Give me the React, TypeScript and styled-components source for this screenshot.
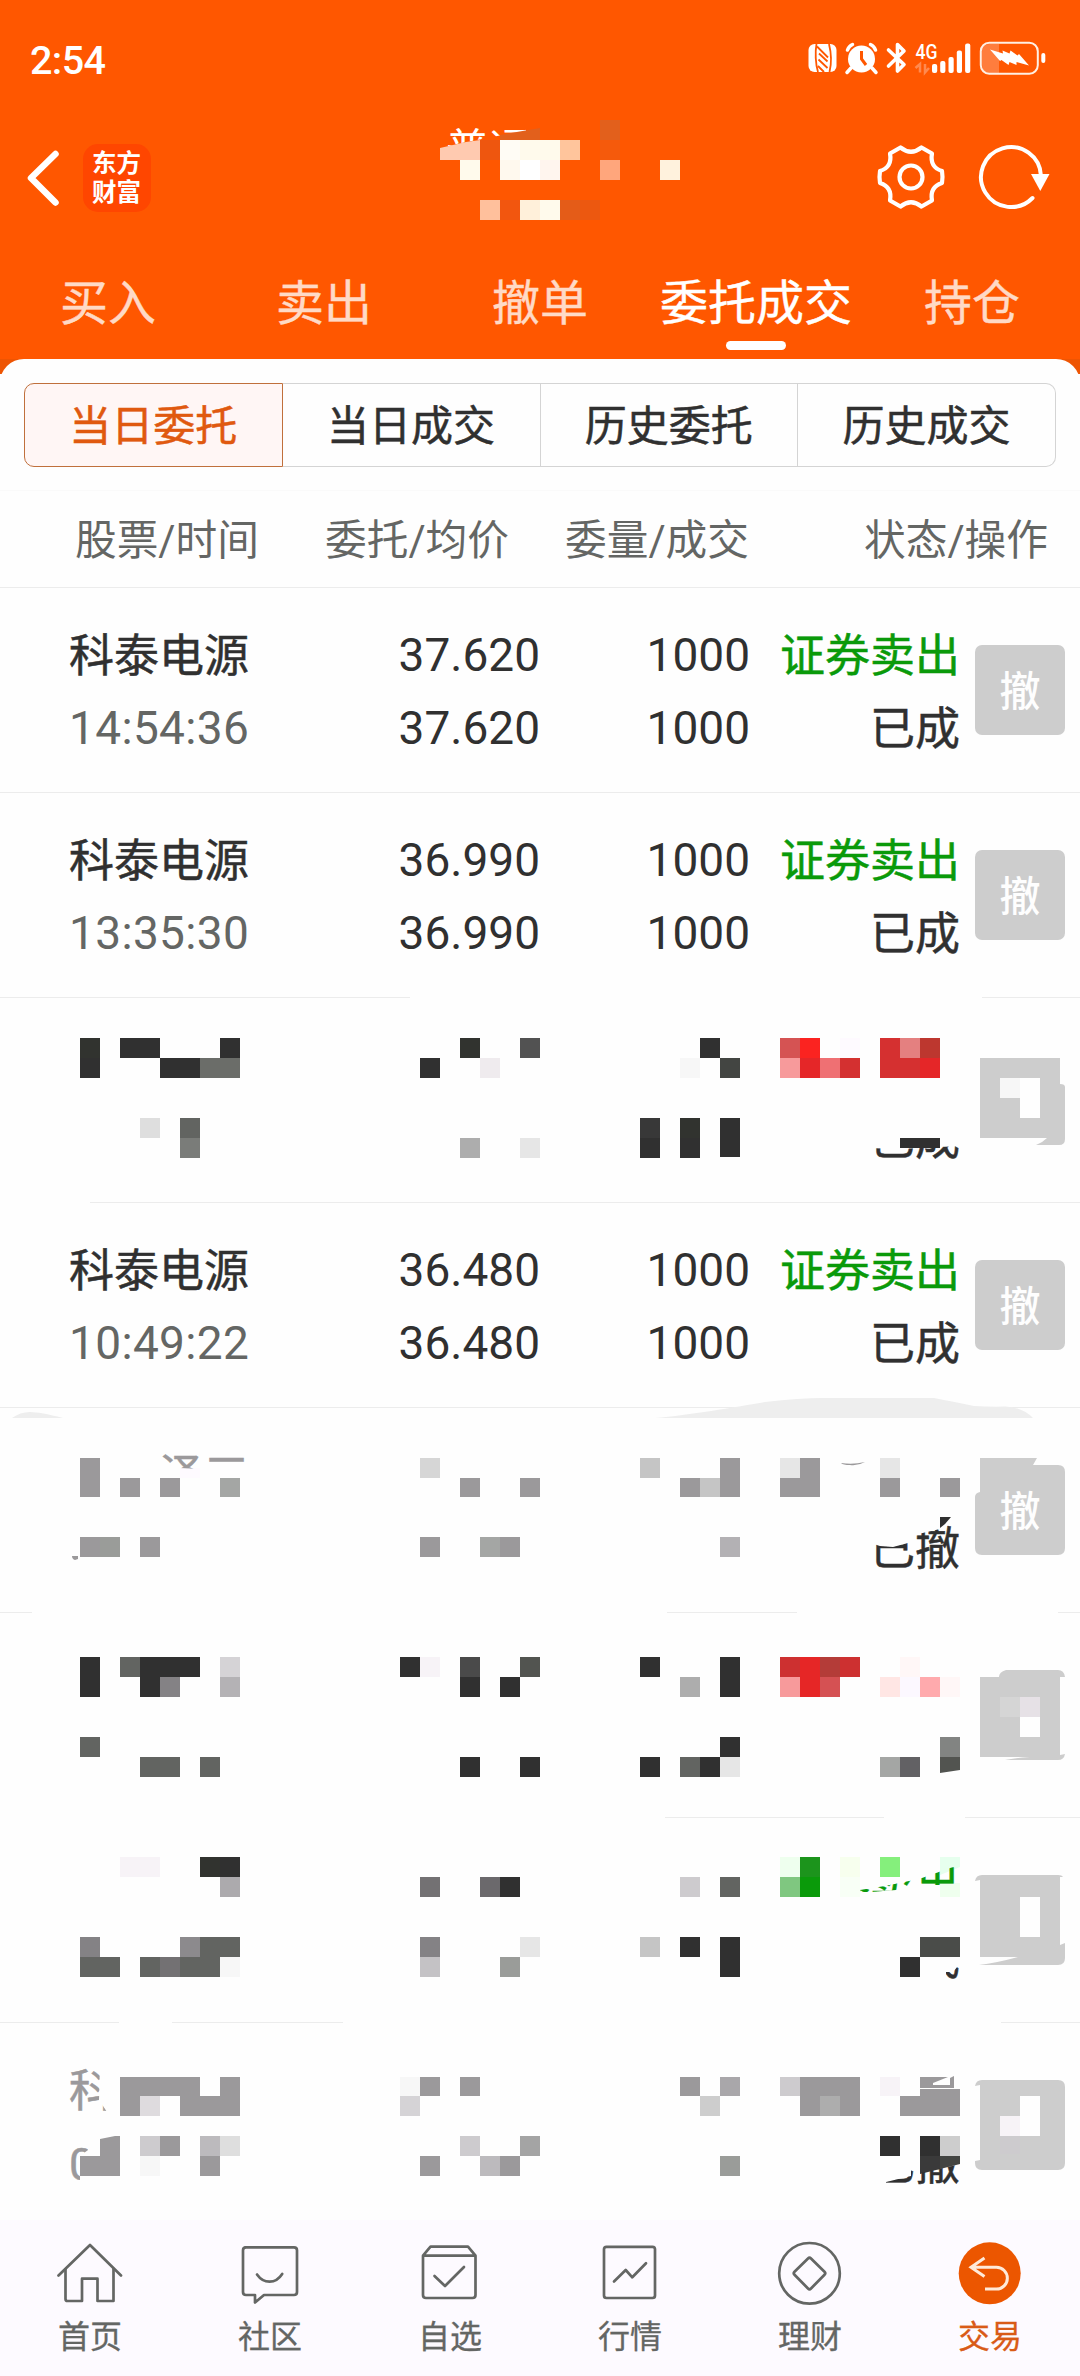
import React from "react";
import styled, { createGlobalStyle } from "styled-components";

type Point = [number, number];
/* column, top, fill, columns spanned, height */
type Block = [number, number, string, number?, number?];
interface Fragment { text: string; clip: Point[] }
interface Order {
  name?: string;
  time?: string;
  price?: string;
  filled?: string;
  qty?: string;
  side?: string;
  state?: string;
  cover?: Cover;
}
interface Cover {
  name?: Fragment;
  time?: Fragment;
  side?: Fragment;
  state?: Fragment;
  button: string;
  buttonLabel?: boolean;
  blocks: Block[];
  shapes?: [string, string][];
  rule: [number, number][];
}

const GlobalStyle = createGlobalStyle`
  * { box-sizing: border-box; }
  body {
    margin: 0;
    background: #fefefe;
    font-family: Roboto, "Noto Sans CJK SC", sans-serif;
  }
`;

const Page = styled.div`
  width: 1080px;
  height: 2376px;
  display: flex;
  flex-direction: column;
  overflow: hidden;
  background: #fefefe;
`;

const Header = styled.header`
  flex: none;
  height: 359px;
  background: #ff5700;
  color: #fff;
`;

const StatusBar = styled.div`
  height: 118px;
  padding: 0 33px 0 30px;
  display: flex;
  align-items: center;
  justify-content: space-between;
`;

const Clock = styled.span`
  font-size: 39.5px;
  font-weight: 500;
  line-height: 48px;
  letter-spacing: -0.6px;
  padding-top: 3px;
`;

const TitleBar = styled.div`
  height: 120px;
  display: grid;
  grid-template-columns: 1fr 300px 1fr;
  align-items: center;
`;

const TitleLeft = styled.div`
  display: flex;
  align-items: center;
  gap: 23px;
  padding-left: 24px;
`;

const TitleRight = styled.div`
  display: flex;
  align-items: center;
  justify-content: flex-end;
  gap: 32px;
  padding: 0 28px 2px 0;
`;

const Logo = styled.div`
  width: 68px;
  height: 68px;
  border-radius: 15px;
  background: #ff4600;
  padding: 3px 9px 0 9px;
  font-family: "Noto Sans CJK SC", sans-serif;
  font-size: 24.5px;
  font-weight: 700;
  line-height: 29px;
  word-break: break-all;
`;

const TitleBox = styled.div`
  position: relative;
  width: 300px;
  height: 120px;
`;

const TitleText = styled.div`
  padding-left: 56px;
  font-size: 43px;
  line-height: 64px;
  clip-path: polygon(50px 0, 136px 0, 136px 14px, 112px 17px, 98px 20px, 76px 24px, 50px 30px);
`;

const Overlay = styled.svg`
  position: absolute;
  inset: 0;
  width: 100%;
  height: 100%;
`;

const Tabs = styled.nav`
  display: flex;
  height: 121px;
`;

const Tab = styled.div<{ $active?: boolean }>`
  flex: 1;
  display: flex;
  flex-direction: column;
  align-items: center;
  padding-top: 34px;
  font-size: 48px;
  line-height: 64px;
  white-space: nowrap;
  -webkit-text-stroke: 0.4px currentColor;
  color: ${(p) => (p.$active ? "#fff" : "#ffdac6")};
  &::after {
    content: "";
    width: 60px;
    height: 9px;
    margin-top: 5px;
    border-radius: 5px;
    background: ${(p) => (p.$active ? "#fff" : "transparent")};
  }
`;

const Body = styled.main`
  flex: 1;
  min-height: 0;
  overflow: hidden;
  background: linear-gradient(#ee5503 0 15px, #fefefe 15px);
`;

const Card = styled.section`
  background: #fefefe;
  border-radius: 24px 24px 0 0;
  padding-top: 24px;
`;

const Segments = styled.div`
  display: flex;
  height: 84px;
  margin: 0 24px 23px;
`;

const Segment = styled.div<{ $active?: boolean }>`
  flex: 1;
  display: flex;
  align-items: center;
  justify-content: center;
  font-size: 42px;
  line-height: 60px;
  padding-top: 4px;
  -webkit-text-stroke: 0.5px currentColor;
  color: ${(p) => (p.$active ? "#e0590f" : "#303030")};
  background: ${(p) => (p.$active ? "#fff6f5" : "transparent")};
  border: 1px solid ${(p) => (p.$active ? "#c0703c" : "#d4d4d4")};
  border-left-width: ${(p) => (p.$active ? "1px" : "0")};
  &:first-child { border-radius: 10px 0 0 10px; }
  &:last-child { border-radius: 0 10px 10px 0; }
`;

const Columns = styled.div`
  display: grid;
  grid-template-columns: 184px 250px 240px 299px;
  align-items: center;
  height: 98px;
  padding-left: 75px;
  border-top: 1px solid #fafafa;
  border-bottom: 1px solid #ececec;
  font-size: 41.7px;
  line-height: 60px;
  color: #646664;
`;

const ColumnName = styled.span<{ $right?: boolean }>`
  text-align: ${(p) => (p.$right ? "right" : "left")};
  white-space: nowrap;
  padding-top: 4px;
`;

const Row = styled.div<{ $ruled: boolean }>`
  position: relative;
  display: grid;
  grid-template-columns: 191px 280px 210px 210px 90px;
  height: 205px;
  padding: 30px 0 0 69px;
  border-bottom: 1px solid ${(p) => (p.$ruled ? "#ececec" : "transparent")};
`;

const Cell = styled.div<{ $left?: boolean }>`
  text-align: ${(p) => (p.$left ? "left" : "right")};
`;

const Line = styled.div<{ $tone?: string; $clip?: string }>`
  height: 73px;
  font-size: 45px;
  line-height: 77px;
  white-space: nowrap;
  -webkit-text-stroke: 0.5px currentColor;
  color: ${(p) => p.$tone ?? "#303030"};
  ${(p) => p.$clip && `clip-path: ${p.$clip};`}
`;

const Digits = styled(Line)<{ $spaced?: boolean }>`
  font-size: 46px;
  line-height: 74px;
  letter-spacing: ${(p) => (p.$spaced ? "0.35px" : "0")};
  -webkit-text-stroke: 0;
`;

const CancelButton = styled.div<{ $bare?: boolean }>`
  width: 90px;
  height: 90px;
  margin: 27px 0 0 15px;
  border-radius: 7px;
  background: ${(p) => (p.$bare ? "transparent" : "#cdcdcd")};
  color: #fefefe;
  font-size: 41px;
  font-weight: 500;
  line-height: 94px;
  text-align: center;
  position: relative;
  z-index: 1;
`;

const NavBar = styled.footer`
  flex: none;
  height: 156px;
  display: flex;
  background: #fdfaff;
`;

const NavItem = styled.div<{ $active?: boolean }>`
  flex: 1;
  display: flex;
  flex-direction: column;
  align-items: center;
  padding-top: 20px;
  color: ${(p) => (p.$active ? "#d95b17" : "#646664")};
  font-size: 32px;
  line-height: 42px;
  -webkit-text-stroke: 0.3px currentColor;
  svg { margin-bottom: 10px; }
`;

/* The row's bottom border is part of its 205px, so the frame covers the border too. */
const OverlayFrame = styled.div`
  position: absolute;
  left: 0;
  top: 0;
  width: 1080px;
  height: 205px;
`;

const G = "#9b999b";
const K = "#303030";
const M = "#626461";

const polygon = (points: Point[], left: number, top: number) =>
  `polygon(${points.map(([x, y]) => `${x - left}px ${y - top}px`).join(", ")})`;

const LIST_TOP = 588;
const ROW = 205;

const orders: Order[] = [
  { name: "科泰电源", time: "14:54:36", price: "37.620", filled: "37.620", qty: "1000", side: "证券卖出", state: "已成" },
  { name: "科泰电源", time: "13:35:30", price: "36.990", filled: "36.990", qty: "1000", side: "证券卖出", state: "已成" },
  {
    cover: {
      state: { text: "已成", clip: [[865, 1148], [900, 1149], [960, 1146], [960, 1162], [865, 1162]] },
      button: "M980 1058H1060V1084Q1065 1084 1065 1087V1139Q1065 1145 1059 1145H1036Q1042 1143 1047 1138H980Z",
      rule: [[90, 1080]],
      blocks: [
        [4, 1038, "#31332f"], [6, 1038, K, 2], [11, 1038, K], [23, 1038, "#31332f"], [26, 1038, "#525252"],
        [4, 1058, K], [8, 1058, K, 2], [10, 1058, "#6b6d69", 2], [21, 1058, K], [24, 1058, "#efebee"],
        [7, 1118, "#dedede"], [9, 1118, M], [9, 1138, "#7a7c79"], [23, 1138, "#adadad"], [26, 1138, "#e6e6e6"],
        [35, 1038, K], [39, 1038, "#d55353"], [40, 1038, "#fb2320"], [42, 1038, "#fefaff"],
        [44, 1038, "#d53030"], [45, 1038, "#e48080"], [46, 1038, "#bd372f"],
        [34, 1058, "#f7f7f7"], [36, 1058, "#434542"], [39, 1058, "#f79a9b"], [40, 1058, "#e52628"],
        [41, 1058, "#ef7073"], [42, 1058, "#d43030"], [44, 1058, "#d53030", 2], [46, 1058, "#e52628"],
        [32, 1118, "#383838"], [34, 1118, "#31332f"], [36, 1118, K, 1, 39],
        [32, 1138, K], [34, 1138, K], [45, 1138, K, 2, 10],
        [50, 1078, "#f7f7f7"], [51, 1078, "#fefefe", 1, 40],
      ],
    },
  },
  { name: "科泰电源", time: "10:49:22", price: "36.480", filled: "36.480", qty: "1000", side: "证券卖出", state: "已成" },
  {
    cover: {
      name: { text: "　　泽三", clip: [[160, 1450], [250, 1450], [250, 1462], [204, 1462], [200, 1469], [180, 1468], [172, 1464], [160, 1464]] },
      state: { text: "已撤", clip: [[870, 1543], [880, 1546], [893, 1547], [908, 1543], [914, 1544], [914, 1535], [940, 1529], [950, 1524], [961, 1532], [961, 1575], [870, 1575]] },
      button: "M980 1458H1037L1033 1465H1058Q1065 1465 1065 1472V1548Q1065 1555 1058 1555H982Q975 1555 975 1548V1497Q975 1493 980 1492Z",
      buttonLabel: true,
      rule: [[0, 32], [667, 797], [1058, 1080]],
      blocks: [
        [4, 1458, G, 1, 39], [6, 1478, G, 1, 19], [8, 1478, G, 1, 19], [9, 1468, "#fefaff", 1, 10], [11, 1478, "#a4a6a4", 1, 19],
        [21, 1458, "#d6d6d6"], [23, 1478, G, 1, 19], [26, 1478, G, 1, 19],
        [32, 1458, "#c5c5c5"], [34, 1478, G, 1, 19], [35, 1478, "#c5c5c5", 1, 19], [36, 1458, G, 1, 39],
        [39, 1458, "#e6e6e6"], [40, 1458, G, 1, 39], [39, 1478, G, 1, 19], [44, 1458, "#e6e6e6"], [44, 1478, G, 1, 19], [47, 1478, G, 1, 19],
        [4, 1537, G], [5, 1537, "#9a9c99"], [7, 1537, G], [21, 1537, G], [24, 1537, "#a4a6a4"], [25, 1537, G], [36, 1537, "#b3b1b4"],
      ],
      shapes: [
        ["M12 1418Q20 1412 30 1412Q40 1412 63 1418Z", "#eee"],
        ["M655 1418C690 1415 735 1407 765 1402Q800 1398 822 1398H934Q950 1401 974 1406Q992 1407 1005 1406.5Q1022 1407 1033 1418Z", "#eee"],
        ["M841 1463Q853 1465 865 1462Q858 1466 850 1465Q843 1465 841 1463Z", G],
        ["M940 1517H951L945 1524L940 1528Z", K],
        ["M72 1556h6v3l-3 1q-3-1-3-4z", G],
      ],
    },
  },
  {
    cover: {
      button: "M980 1677H999Q999 1672 1006 1670H1058Q1064 1670 1065 1677H1060V1755L1065 1754Q1064 1760 1058 1760H1005Q1015 1758 1030 1757H980Z",
      rule: [[665, 884], [965, 1080]],
      blocks: [
        [4, 1657, K, 1, 40], [6, 1657, M], [7, 1657, K, 3], [11, 1657, "#d5d3d6"], [20, 1657, K], [21, 1657, "#f7f3f7"],
        [23, 1657, "#4a4a4a"], [26, 1657, "#525450"], [32, 1657, K], [36, 1657, K, 1, 40],
        [39, 1657, "#cd3030"], [40, 1657, "#e62626", 1, 40], [41, 1657, "#b43c38"], [42, 1657, "#cd3030"], [45, 1657, "#fff7f7"],
        [7, 1677, K], [8, 1677, "#848285"], [11, 1677, "#b4b2b5"], [23, 1677, K], [25, 1677, K], [34, 1677, "#adadad"],
        [39, 1677, "#f79a9b"], [41, 1677, "#d55153"], [44, 1677, "#ffe6e4"], [45, 1677, "#fcf8ff"], [46, 1677, "#ffaaad"], [47, 1677, "#fff7f7"],
        [4, 1737, M], [36, 1737, K], [47, 1737, "#828482"],
        [7, 1757, M, 2], [10, 1757, M], [23, 1757, K], [26, 1757, K], [32, 1757, K], [34, 1757, M], [35, 1757, K], [36, 1757, "#e6e6e6"],
        [44, 1757, "#a4a6a4"], [45, 1757, "#626164"],
        [50, 1697, "#d5d5d5"], [51, 1697, "#e6e1e6"], [51, 1717, "#fefefe"],
      ],
      shapes: [["M940 1757H960V1770L940 1773Z", "#525450"]],
    },
  },
  {
    cover: {
      side: { text: "证券卖出", clip: [[860, 1892], [860, 1890], [885, 1886], [914, 1880], [922, 1878], [953, 1867], [960, 1867], [960, 1885], [920, 1885], [908, 1886], [896, 1890], [870, 1892]] },
      state: { text: "已成", clip: [[946, 1972], [953, 1972], [958, 1966], [961, 1966], [961, 1980], [946, 1980]] },
      button: "M975 1881Q976 1875 982 1875H1058Q1062 1875 1063 1877H1060V1945L1065 1943V1958Q1065 1965 1058 1965H979Q996 1963 1018 1957H980V1880Z",
      rule: [[0, 119], [172, 343], [1001, 1080]],
      blocks: [
        [6, 1857, "#f7f3f7", 2], [10, 1857, "#31332f"], [11, 1857, K], [39, 1857, "#eeffee"], [40, 1857, "#1c941c"],
        [42, 1857, "#f7ffee"], [44, 1857, "#85ef7c"],
        [11, 1877, "#acaaad"], [21, 1877, "#737173"], [24, 1877, "#6b696c"], [25, 1877, K], [34, 1877, "#cdcbce"], [36, 1877, M],
        [39, 1877, "#7fc780"], [40, 1877, "#0a9a0a"], [42, 1877, "#f8fff6"], [47, 1883, "#efffee", 1, 14],
        [4, 1937, "#848285"], [9, 1937, "#8c8a8d"], [10, 1937, M, 2], [21, 1937, "#848285"], [26, 1937, "#e6e6e6"],
        [32, 1937, "#c5c5c5"], [34, 1937, K], [36, 1937, K, 1, 40], [46, 1937, "#4a4c49", 2],
        [4, 1957, M, 2], [7, 1957, M], [8, 1957, "#737173"], [9, 1957, M, 2], [11, 1957, "#f7f7f7"], [21, 1957, "#c4c2c5"],
        [25, 1957, "#9a9c99"], [45, 1957, K],
        [51, 1897, "#fefefe", 1, 40],
      ],
      shapes: [["M940 1857H960V1867L940 1875Z", "#e6ffee"]],
    },
  },
  {
    cover: {
      name: { text: "科", clip: [[68, 2060], [100, 2060], [99, 2100], [107, 2112], [68, 2112]] },
      time: { text: "0", clip: [[68, 2140], [88, 2140], [88, 2150], [80, 2156], [80, 2182], [68, 2182]] },
      state: { text: "已撤", clip: [[886, 2182], [911, 2176], [911, 2170], [920, 2173], [961, 2164], [961, 2190], [886, 2190]] },
      button: "M982 2080H1058Q1065 2080 1065 2087V2163Q1065 2170 1058 2170H982Q975 2170 975 2163V2161L980 2160V2085L975 2086Q976 2080 982 2080Z",
      rule: [],
      blocks: [
        [6, 2077, G, 4, 19], [11, 2077, G, 1, 19], [20, 2077, "#f7f7f7", 1, 19], [21, 2077, G, 1, 19], [23, 2077, G, 1, 19],
        [34, 2077, G, 1, 19], [36, 2077, "#a9a7aa", 1, 19], [39, 2077, "#cdcbce", 1, 19], [40, 2077, G, 3, 39],
        [44, 2077, "#f7f3f7", 1, 19], [46, 2089, G, 2, 7],
        [6, 2096, G], [7, 2096, "#dedbde"], [9, 2096, G, 3], [20, 2096, "#d5d3d6"], [35, 2096, "#cdcdcd"], [41, 2096, "#adadad"], [45, 2096, G, 3],
        [7, 2136, "#cdcbce"], [8, 2136, G], [10, 2136, "#bcbabd"], [11, 2136, "#dedede"], [23, 2136, "#cdcbce"], [26, 2136, "#a4a4a4"],
        [44, 2136, K], [46, 2136, K], [47, 2136, "#cdcdcd"],
        [4, 2156, G, 2], [7, 2156, "#f7f7f7"], [10, 2156, G], [21, 2156, G], [24, 2156, "#bcbabd"], [25, 2156, G], [36, 2156, "#9a9c99"],
        [51, 2096, "#fefefe", 1, 40], [50, 2116, "#f7f3f7"], [50, 2136, "#cdcbce", 1, 18],
      ],
      shapes: [
        ["M100 2139L115 2136H120V2156H100Z", G],
        ["M920 2077H948L933 2083V2085H950V2078L954 2076V2088H920Z", G],
        ["M920 2156H940V2169L920 2174Z", "#3a3a3a"],
        ["M940 2156H960V2164L940 2169Z", "#434542"],
      ],
    },
  },
];

/* Plain rows whose bottom rule is interrupted. */
const brokenRules: Record<number, [number, number][]> = { 1: [[0, 410], [982, 1080]] };

const RuleSegments = ({ spans, y }: { spans: [number, number][]; y: number }) => (
  <>
    {spans.map(([a, b]) => <rect key={a} x={a} y={y} width={b - a} height={1} fill="#ececec" />)}
  </>
);

const BlockLayer = ({ cover, top }: { cover: Cover; top: number }) => (
  <OverlayFrame>
    <Overlay viewBox={`0 ${top} 1080 ${ROW}`} overflow="visible">
      <path d={cover.button} fill="#cdcdcd" />
      {cover.blocks.map(([col, y, fill, span = 1, height = 20], i) => (
        <rect key={i} x={col * 20} y={y} width={span * 20} height={height} fill={fill} shapeRendering="crispEdges" />
      ))}
      {cover.shapes?.map(([d, fill], i) => <path key={i} d={d} fill={fill} />)}
      <RuleSegments spans={cover.rule} y={top + ROW - 1} />
    </Overlay>
  </OverlayFrame>
);

const FragmentLine = ({ part, left, top, tone }: { part?: Fragment; left: number; top: number; tone?: string }) => (
  <Line $tone={tone} $clip={part && polygon(part.clip, left, top)}>{part?.text}</Line>
);

const OrderRow = ({ order, index }: { order: Order; index: number }) => {
  const top = LIST_TOP + index * ROW;
  const { cover } = order;
  if (cover) {
    return (
      <Row $ruled={false}>
        <BlockLayer cover={cover} top={top} />
        <Cell $left>
          <FragmentLine part={cover.name} left={69} top={top + 30} tone={G} />
          <FragmentLine part={cover.time} left={69} top={top + 103} tone={G} />
        </Cell>
        <Cell />
        <Cell />
        <Cell>
          <FragmentLine part={cover.side} left={750} top={top + 30} tone="#0a9a0a" />
          <FragmentLine part={cover.state} left={750} top={top + 103} />
        </Cell>
        {cover.buttonLabel && <CancelButton $bare>撤</CancelButton>}
      </Row>
    );
  }
  const broken = brokenRules[index];
  return (
    <Row $ruled={!broken}>
      {broken && (
        <OverlayFrame>
          <Overlay viewBox={`0 ${top} 1080 ${ROW}`}><RuleSegments spans={broken} y={top + ROW - 1} /></Overlay>
        </OverlayFrame>
      )}
      <Cell $left>
        <Line>{order.name}</Line>
        <Digits $spaced $tone="#646664">{order.time}</Digits>
      </Cell>
      <Cell>
        <Digits>{order.price}</Digits>
        <Digits>{order.filled}</Digits>
      </Cell>
      <Cell>
        <Digits>{order.qty}</Digits>
        <Digits>{order.qty}</Digits>
      </Cell>
      <Cell>
        <Line $tone="#0a9a0a">{order.side}</Line>
        <Line>{order.state}</Line>
      </Cell>
      <CancelButton>撤</CancelButton>
    </Row>
  );
};

const titleBlocks: [number, number, string, number?][] = [
  [600, 120, "#e2601c"], [480, 140, "#ee560f"], [500, 140, "#fffcf5"], [520, 140, "#fffaec", 40],
  [560, 140, "#ffc59c"], [600, 140, "#f55a0c"], [460, 160, "#fffaec"], [500, 160, "#fff9ee"], [520, 160, "#fff"],
  [540, 160, "#fff5ee"], [600, 160, "#ffa67c"], [660, 160, "#fff2dd"], [480, 200, "#ffc09c"], [500, 200, "#f2560f"],
  [520, 200, "#fff0da"], [540, 200, "#fffaec"], [560, 200, "#e45c18"], [580, 200, "#ec5810"],
];

const StatusIcons = () => (
  <svg width="240" height="40" viewBox="807 40 240 40" fill="#fff">
    <rect x="808.5" y="45" width="28" height="28" rx="6" />
    <g fill="none" stroke="#ff5700" strokeWidth="1.8">
      <path d="M816.500 45c-1.500 8-1 20 1.500 28M829 45c2 8 2.500 20 0.500 28" />
      <path d="M817 47.500l11 11M819 54.500l8.500 8M818.500 60.500l9 8.500M818 67l6 6" />
    </g>
    <circle cx="861.5" cy="60" r="13.5" />
    <path d="M851 69l-4 4.500M872 69l4 4.500M847.500 51q1.500-4 5-5.500M875.500 51q-1.500-4-5-5.500" stroke="#fff" strokeWidth="3.500" strokeLinecap="round" fill="none" />
    <path d="M861.500 52v8l4.500 6" stroke="#ff5700" strokeWidth="3" fill="none" />
    <path d="M888.500 51l15.500 14.500-6.500 6.500V45.500l6.500 6.500-15.500 15" stroke="#fff" strokeWidth="3.600" strokeLinecap="round" strokeLinejoin="round" fill="none" />
    <text x="915.5" y="59.5" fontSize="20.5" fontWeight="500" textLength="22" lengthAdjust="spacingAndGlyphs">4G</text>
    <path d="M915.500 69l4.500-4v8.500M925 65v8.500l4-4.500" stroke="#ff8a50" strokeWidth="2.500" fill="none" />
    <rect x="932" y="65" width="5.200" height="9" rx="2" />
    <rect x="940.2" y="62" width="5.200" height="12" rx="2" />
    <rect x="948.5" y="58" width="5.200" height="16" rx="2" />
    <rect x="956.8" y="51.5" width="5.200" height="22.500" rx="2" />
    <rect x="965.1" y="44.5" width="5.200" height="29.500" rx="2" />
    <path d="M999 45H990q-8 0-8 8v13q0 8 8 8h9z" fill="#ff7d3d" />
    <rect x="980.8" y="43.8" width="57" height="31" rx="8.500" fill="none" stroke="#fff0e4" strokeWidth="2" />
    <rect x="1041.3" y="54" width="4" height="10" rx="2" />
    <path d="M990 50.500l13 4-0.500-3 7 3 1-3 7 5 1.500-1.500 10 11.500-12.500-3.500v3l-7-3-1 3-7-5-1.500 1z" />
  </svg>
);

const iconStroke = { fill: "none", stroke: "currentColor", strokeWidth: 2.7, strokeLinecap: "round", strokeLinejoin: "round" } as const;

const navItems: { label: string; active?: boolean; icon: React.ReactNode }[] = [
  {
    label: "首页",
    icon: <g {...iconStroke}><path d="M1.500 35.500L33 5L64 35.500" /><path d="M8.500 29V59q0 2 2 2H25V38.700H40.500V61H56.500V29" /></g>,
  },
  {
    label: "社区",
    icon: <g {...iconStroke}><path d="M8 7.300H57q3 0 3 3V52q0 3-3 3H27L18 62.500V55H9q-3 0-3-3V10.300q0-3 3-3" /><path d="M20 34.500q5 7.200 12.600 7.200T45.200 34" /></g>,
  },
  {
    label: "自选",
    icon: <g {...iconStroke}><path d="M6 15.700L13.500 6.700H51L58.500 15.700V55q0 3-3 3H9q-3 0-3-3ZM6 15.700H58.500" /><path d="M17.500 36L28 46L47 27" /></g>,
  },
  {
    label: "行情",
    icon: <g {...iconStroke}><rect x="7" y="6.8" width="51" height="51.200" rx="2.500" /><path d="M17 41.500L28.700 30L35.300 37.300L49 23.300" /></g>,
  },
  {
    label: "理财",
    icon: <g {...iconStroke}><circle cx="32.5" cy="33.3" r="30.3" /><path d="M31 18.500q1.500-1.500 3 0L47.500 31.800q1.500 1.500 0 3L34 48.500q-1.500 1.500-3 0L17.500 34.800q-1.500-1.500 0-3Z" /></g>,
  },
  {
    label: "交易",
    active: true,
    icon: <><circle cx="32.7" cy="33.3" r="31" fill="#ec5600" /><path d="M27.500 18L14 27.300L27.500 36.500M14.500 27.300H39.500a10.800 10.800 0 0 1 0 21.700H28" fill="none" stroke="#ffead8" strokeWidth="3" /></>,
  },
];

export default function App() {
  return (
    <Page>
      <GlobalStyle />
      <Header>
        <StatusBar>
          <Clock>2:54</Clock>
          <StatusIcons />
        </StatusBar>
        <TitleBar>
          <TitleLeft>
            <svg width="36" height="60" viewBox="24 148 36 60" fill="none" stroke="#fff" strokeWidth="6.500" strokeLinecap="round" strokeLinejoin="round">
              <path d="M55.500 154L31 178L55.500 202.500" />
            </svg>
            <Logo>东方财富</Logo>
          </TitleLeft>
          <TitleBox>
            <TitleText>普通</TitleText>
            <Overlay viewBox="390 118 300 120">
              <path d="M500 135L540 128V140H500Z" fill="#e2601c" />
              <path d="M440 148L466 142L480 140V160H440Z" fill="#ffcab0" />
              {titleBlocks.map(([x, y, fill, w = 20]) => (
                <rect key={`${x}-${y}`} x={x} y={y} width={w} height={20} fill={fill} shapeRendering="crispEdges" />
              ))}
            </Overlay>
          </TitleBox>
          <TitleRight>
            <svg width="70" height="70" viewBox="875.500 142 70 70" fill="none" stroke="#fff" strokeWidth="4.200" strokeLinejoin="round">
              <path d="M900 147.500Q910.500 156 921 147.500L931.500 153.500Q929 167 941.500 171Q942.500 177 941.500 183Q929 187 931.500 200.500L921 206.500Q910.500 198 900 206.500L889.500 200.500Q892 187 879.500 183Q878.500 177 879.500 171Q892 167 889.500 153.500Z" />
              <circle cx="910.5" cy="177" r="11.5" />
            </svg>
            <svg width="74" height="70" viewBox="978 142 74 70" fill="none">
              <path d="M1041 176A30 30 0 1 0 1032.500 198" stroke="#fff" strokeWidth="4" strokeLinecap="round" />
              <path d="M1031 174H1049.500L1040.300 191Z" fill="#fff" />
            </svg>
          </TitleRight>
        </TitleBar>
        <Tabs>
          <Tab>买入</Tab>
          <Tab>卖出</Tab>
          <Tab>撤单</Tab>
          <Tab $active>委托成交</Tab>
          <Tab>持仓</Tab>
        </Tabs>
      </Header>
      <Body>
        <Card>
          <Segments>
            <Segment $active>当日委托</Segment>
            <Segment>当日成交</Segment>
            <Segment>历史委托</Segment>
            <Segment>历史成交</Segment>
          </Segments>
          <Columns>
            <ColumnName>股票/时间</ColumnName>
            <ColumnName $right>委托/均价</ColumnName>
            <ColumnName $right>委量/成交</ColumnName>
            <ColumnName $right>状态/操作</ColumnName>
          </Columns>
          {orders.map((order, i) => <OrderRow key={i} order={order} index={i} />)}
        </Card>
      </Body>
      <NavBar>
        {navItems.map(({ label, active, icon }) => (
          <NavItem key={label} $active={active}>
            <svg width="66" height="66" viewBox="0 0 66 66">{icon}</svg>
            {label}
          </NavItem>
        ))}
      </NavBar>
    </Page>
  );
}
